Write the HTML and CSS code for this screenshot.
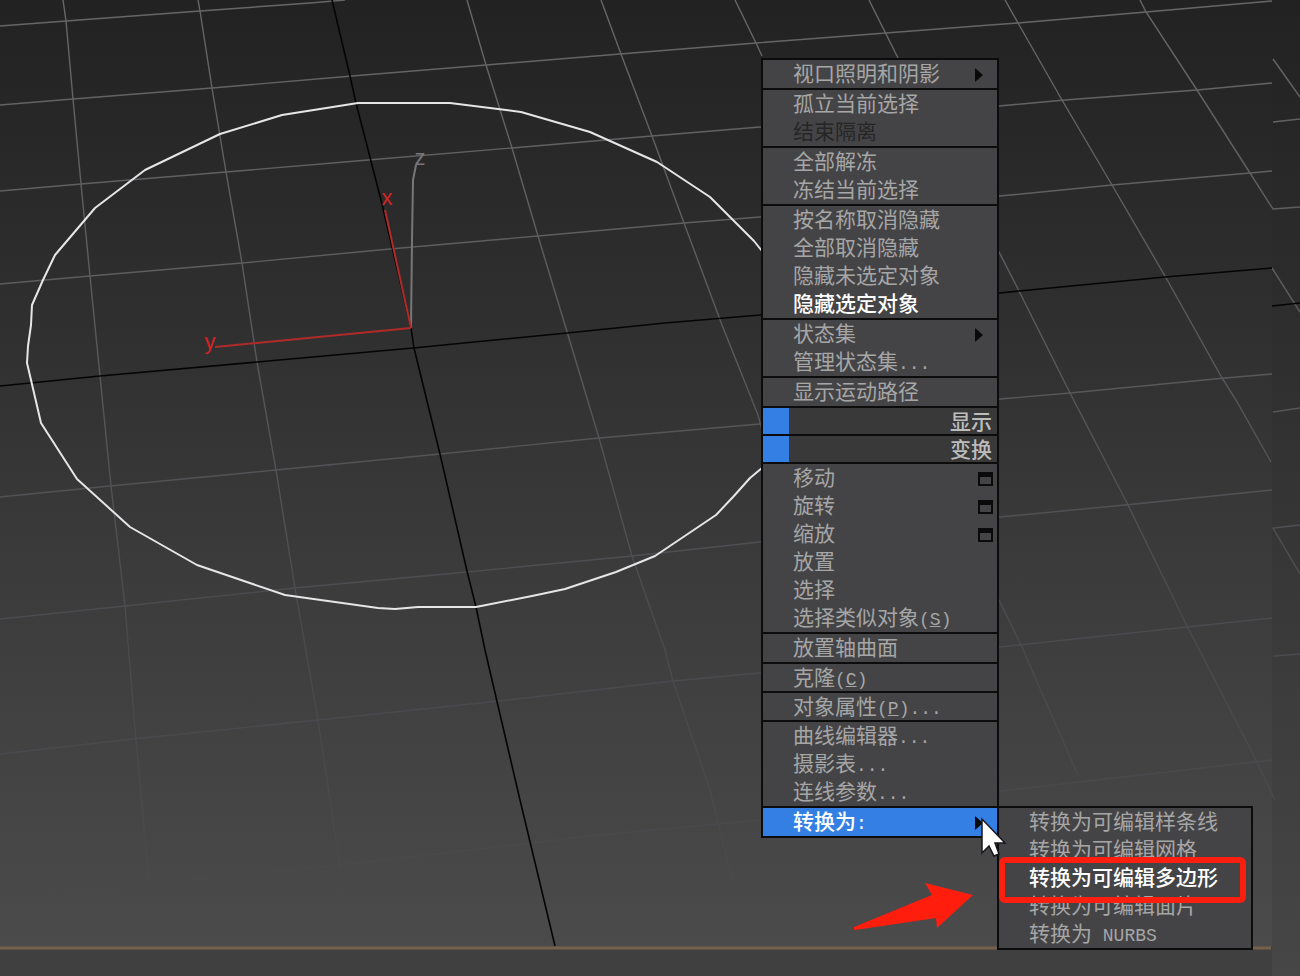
FILE: index.html
```
<!DOCTYPE html>
<html lang="zh-CN">
<head>
    <meta charset="UTF-8">
    <meta name="viewport" content="width=device-width, initial-scale=1.0">
    <title>转换为可编辑多边形</title>
    <link rel="stylesheet" href="styles.css">
</head>
<body>
    <main class="viewport">
        <svg class="scene" viewBox="0 0 1300 976" preserveAspectRatio="xMinYMin slice" aria-hidden="true">
            <defs>
                <linearGradient id="fade" gradientUnits="userSpaceOnUse" x1="0" y1="0" x2="0" y2="900">
                    <stop offset="0" stop-color="#666668"/>
                    <stop offset="0.4" stop-color="#59595c"/>
                    <stop offset="0.7" stop-color="#4a4a4f"/>
                    <stop offset="1" stop-color="#48494b"/>
                </linearGradient>
                <linearGradient id="floor" x1="0" y1="0" x2="0" y2="1">
                    <stop offset="0" stop-color="#222222"/>
                    <stop offset="0.33" stop-color="#2f2f30"/>
                    <stop offset="0.6" stop-color="#3b3b3b"/>
                    <stop offset="1" stop-color="#4b4b4c"/>
                </linearGradient>
            </defs>
            <rect width="1300" height="976" fill="#404040"/>
            <rect width="1272" height="947" fill="url(#floor)"/>
            <rect x="1272" width="28" height="1100" fill="url(#floor)"/>

            <!-- grid -->
            <g class="grid">
                <path d="M0 26 66 21 200 11 310 3 345 0"/>
                <path d="M0 105 73 99 212 88 352 76 486 65 620 54 756 43 990 25 1018 23 1146 12 1272 1"/>
                <path d="M0 191 81 184 226 172 368 160 512 148 652 136 760 127 999 106 1065 100 1197 90 1272 83"/>
                <path d="M0 284 90 276 242 263 390 249 538 236 684 223 760 217 1000 196 1112 185 1250 173 1272 171"/>
                <path d="M0 497 110 486 276 470 440 454 599 438 760 424 1000 399 1070 393 1225 378 1272 374"/>
                <path d="M0 619 125 606 295 588 467 572 632 556 760 542 1000 517 1125 505 1272 490"/>
                <path d="M0 754 133 739 318 720 490 702 673 681 760 673 1000 647 1187 627 1272 618"/>
                <path d="M0 900 340 865 600 835 760 820 1010 790 1272 760"/>
                <path d="M63 0 66 21 73 99 81 184 90 276 100 376 111 486 125 606 136 740 150 890"/>
                <path d="M198 0 200 11 212 88 226 172 242 263 257 362 276 470 295 588 318 720 345 900"/>
                <path d="M467 0 486 65 512 148 538 236 565 325 599 438 632 556 665 650 673 681 710 790 735 890"/>
                <path d="M601 0 621 54 652 136 684 223 722 325 758 415 762 430"/>
                <path d="M735 0 756 43 762 56M998 598 1022 647 1045 700 1078 775"/>
                <path d="M869 0 898 58M998 250 1019 291 1070 393 1127 503 1187 626 1255 758 1275 800"/>
                <path d="M1005 0 1018 23 1062 100 1112 185 1165 276 1222 378 1236 400 1271 462"/>
                <path d="M1140 0 1146 12 1197 90 1250 173 1273 209 1300 207"/>
                <path d="M1273 59 1300 97M1273 122 1300 119M1272 268 1300 312M1273 412 1300 408M1300 525 1273 528 1300 574M1273 656 1300 654"/>
            </g>
            <g class="origin">
                <path d="M0 386 100 376 257 362 413 348 567 333 665 323 760 315 1000 293 1019 291 1165 277 1272 268"/>
                <path d="M1272 306 1300 303"/>
                <path d="M332 0 350 76 356 103 381 200 411 328 414 348 440 454 467 571 476 607 485 650 520 800 555 946"/>
            </g>
            <path class="frame" d="M0 948H1271"/>

            <!-- circle spline -->
            <path class="spline" d="M762 251 754 241 710 197 657 162 590 132 521 112 450 103 358 103 320 109 282 115 220 134 145 170 95 208 55 255 43 280 32 305 31 325 28 346 27 363 31 380 41 423 77 479 130 527 197 565 285 595 378 608 395 609 418 607 476 607 532 596 565 589 616 572 655 556 716 515 733 497 750 478 762 468"/>

            <!-- axis tripod -->
            <path class="axis-z" d="M411 328 412 240 413 180 416 165"/>
            <path class="axis" d="M411 328 385 210M411 328 215 347"/>
            <text class="axis-name axis-name-z" x="420" y="165">z</text>
            <text class="axis-name" x="387" y="205">x</text>
            <text class="axis-name" x="210" y="349">y</text>
        </svg>

        <div class="menu" role="menu">
            <div class="group">
                <button class="item" role="menuitem">视口照明和阴影<span class="more"></span></button>
            </div>
            <div class="group">
                <button class="item" role="menuitem">孤立当前选择</button>
                <button class="item" role="menuitem" disabled>结束隔离</button>
            </div>
            <div class="group">
                <button class="item" role="menuitem">全部解冻</button>
                <button class="item" role="menuitem">冻结当前选择</button>
            </div>
            <div class="group">
                <button class="item" role="menuitem">按名称取消隐藏</button>
                <button class="item" role="menuitem">全部取消隐藏</button>
                <button class="item" role="menuitem">隐藏未选定对象</button>
                <button class="item strong" role="menuitem">隐藏选定对象</button>
            </div>
            <div class="group">
                <button class="item" role="menuitem">状态集<span class="more"></span></button>
                <button class="item" role="menuitem">管理状态集<span class="latin">...</span></button>
            </div>
            <div class="group">
                <button class="item" role="menuitem">显示运动路径</button>
            </div>
            <div class="title">显示</div>
            <div class="title">变换</div>
            <div class="group">
                <button class="item" role="menuitem">移动<span class="box"></span></button>
                <button class="item" role="menuitem">旋转<span class="box"></span></button>
                <button class="item" role="menuitem">缩放<span class="box"></span></button>
                <button class="item" role="menuitem">放置</button>
                <button class="item" role="menuitem">选择</button>
                <button class="item" role="menuitem">选择类似对象<span class="latin">(<u>S</u>)</span></button>
            </div>
            <div class="group">
                <button class="item" role="menuitem">放置轴曲面</button>
            </div>
            <div class="group">
                <button class="item compact" role="menuitem">克隆<span class="latin">(<u>C</u>)</span></button>
            </div>
            <div class="group">
                <button class="item compact" role="menuitem">对象属性<span class="latin">(<u>P</u>)...</span></button>
            </div>
            <div class="group">
                <button class="item" role="menuitem">曲线编辑器<span class="latin">...</span></button>
                <button class="item" role="menuitem">摄影表<span class="latin">...</span></button>
                <button class="item" role="menuitem">连线参数<span class="latin">...</span></button>
            </div>
            <div class="group parent">
                <button class="item active" role="menuitem" aria-haspopup="true">转换为<span class="latin">:</span><span class="more"></span></button>
                <div class="submenu" role="menu">
                    <button class="item" role="menuitem">转换为可编辑样条线</button>
                    <button class="item" role="menuitem">转换为可编辑网格</button>
                    <button class="item strong" role="menuitem">转换为可编辑多边形</button>
                    <button class="item" role="menuitem">转换为可编辑面片</button>
                    <button class="item" role="menuitem">转换为<span class="latin">&nbsp;NURBS</span></button>
                    <div class="mark"></div>
                </div>
                <svg class="cursor" width="28" height="44" viewBox="0 0 28 44" aria-hidden="true">
                    <path d="M2 2V36L9 29 14 39 19 37 15 26H25Z" fill="#fff" stroke="#17171c" stroke-width="1.5"/>
                </svg>
                <svg class="arrow" width="122" height="50" viewBox="0 0 122 50" aria-hidden="true">
                    <path d="M2 45 80 13 73 1 121 13 85 46 84 36 10 47 2 48Z" fill="#ff1d0d"/>
                </svg>
            </div>
        </div>
    </main>
</body>
</html>
```
FILE: styles.css
```
* {
    box-sizing: border-box;
}

body {
    margin: 0;
    background: #404040;
    font-family: "Noto Sans CJK SC", sans-serif;
}

.viewport {
    position: relative;
    height: 100vh;
    overflow: hidden;
}

.scene {
    display: block;
    width: 100%;
    height: 100%;
}

.grid,
.origin,
.spline,
.axis,
.axis-z,
.frame {
    fill: none;
}

.grid {
    stroke: url(#fade);
    stroke-width: 1.4;
}

.origin {
    stroke: #050505;
    stroke-width: 1.6;
}

.frame {
    stroke: #75604a;
    stroke-width: 3;
}

.spline {
    stroke: #e4e6e8;
    stroke-width: 2;
    stroke-linejoin: round;
}

.axis {
    stroke: #b02a2a;
    stroke-width: 2;
}

.axis-z {
    stroke: #77777a;
    stroke-width: 2;
}

.axis-name {
    fill: #d62424;
    font-family: "Liberation Sans", sans-serif;
    font-size: 22px;
    text-anchor: middle;
}

.axis-name-z {
    fill: #77777a;
}

/* quad menu */
.menu {
    position: absolute;
    top: 58px;
    left: 761px;
    width: 238px;
    border: 2px solid #0c0c0d;
    border-top: 0;
    background: #444446;
}

.group {
    border-top: 2px solid #0c0c0d;
}

.item {
    display: flex;
    align-items: baseline;
    width: 100%;
    height: 28px;
    padding: 0 4px 0 30px;
    border: 0;
    background: none;
    color: #a6a6a6;
    font-family: inherit;
    font-size: 21px;
    line-height: 25px;
    white-space: nowrap;
}

.compact {
    height: 27px;
}

.item:disabled {
    color: #262626;
}

.strong {
    color: #fff;
    font-weight: 500;
}

.active {
    background: #347fe4;
    color: #fff;
    font-weight: 500;
}

.latin {
    font-family: "Liberation Mono", monospace;
    font-size: 18px;
}

.more {
    align-self: center;
    margin: 2px 10px 0 auto;
    border-left: 8px solid #0a0a0a;
    border-top: 7px solid transparent;
    border-bottom: 7px solid transparent;
}

.box {
    align-self: center;
    width: 15px;
    height: 14px;
    margin: 2px 0 0 auto;
    border: 2px solid #0a0a0a;
    border-top-width: 5px;
}

.title {
    height: 28px;
    padding-right: 5px;
    border-top: 2px solid #0c0c0d;
    background: linear-gradient(to right, #347fe4 26px, #39393a 26px);
    color: #bcbcbc;
    font-size: 21px;
    font-weight: 500;
    line-height: 24px;
    text-align: right;
}

.parent {
    position: relative;
}

.submenu {
    position: absolute;
    top: -2px;
    left: 234px;
    width: 256px;
    border: 2px solid #0c0c0d;
    background: #444446;
}

/* red highlight round the chosen entry */
.mark {
    position: absolute;
    top: 49px;
    left: 0;
    width: 247px;
    height: 46px;
    border: 6px solid #fb1f10;
    border-radius: 6px;
}

.cursor {
    position: absolute;
    top: 9px;
    left: 217px;
}

.arrow {
    position: absolute;
    top: 74px;
    left: 89px;
}
```
